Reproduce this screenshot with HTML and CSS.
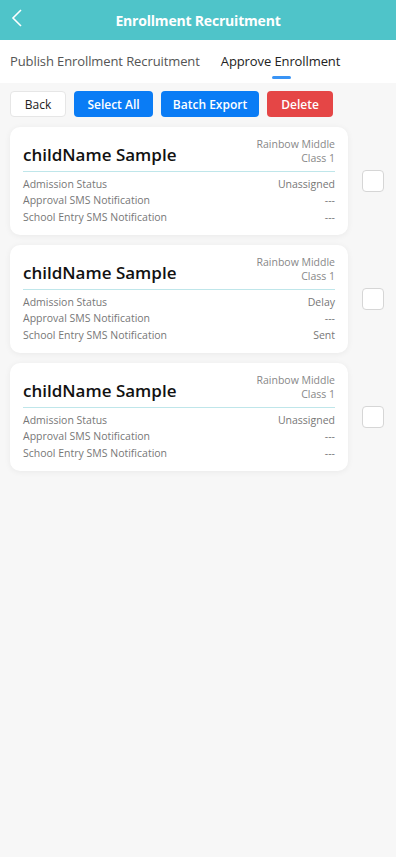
FILE: index.html
```html
<!DOCTYPE html>
<html lang="en">
<head>
    <meta charset="UTF-8">
    <meta name="viewport" content="width=device-width, initial-scale=1.0">
    <title>Enrollment Recruitment</title>
    <link rel="stylesheet" href="styles.css">
</head>
<body>
    <div class="header">
        <svg class="back-icon" width="12" height="18" viewBox="0 0 12 18">
            <polyline points="10,1 2,9 10,17" fill="none" stroke="#fff" stroke-width="1.6"/>
        </svg>
        <h1>Enrollment Recruitment</h1>
    </div>
    <div class="tabs">
        <div class="tab">Publish Enrollment Recruitment</div>
        <div class="tab active">Approve Enrollment</div>
    </div>
    <div class="toolbar">
        <button class="btn btn-plain">Back</button>
        <button class="btn btn-blue">Select All</button>
        <button class="btn btn-blue">Batch Export</button>
        <button class="btn btn-red">Delete</button>
    </div>
    <div class="list" id="list"></div>
    <script>
        const items = [
            { status: 'Unassigned', approval: '---', entry: '---' },
            { status: 'Delay', approval: '---', entry: 'Sent' },
            { status: 'Unassigned', approval: '---', entry: '---' }
        ];
        const list = document.getElementById('list');
        items.forEach(item => {
            const row = document.createElement('div');
            row.className = 'item';
            row.innerHTML = `
                <div class="card">
                    <div class="card-head">
                        <div class="name">childName Sample</div>
                        <div class="school">Rainbow Middle<br>Class 1</div>
                    </div>
                    <div class="card-body">
                        <div class="line"><span>Admission Status</span><span>${item.status}</span></div>
                        <div class="line"><span>Approval SMS Notification</span><span>${item.approval}</span></div>
                        <div class="line"><span>School Entry SMS Notification</span><span>${item.entry}</span></div>
                    </div>
                </div>
                <div class="check"></div>`;
            list.appendChild(row);
        });
    </script>
</body>
</html>
```

FILE: styles.css
```css
body {
    margin: 0;
    font-family: "Open Sans", "Noto Sans", sans-serif;
    background: #f7f7f7;
    min-height: 857px;
}
.header {
    height: 40px;
    background: #4fc4c9;
    display: flex;
    align-items: center;
    justify-content: center;
    position: relative;
}
.back-icon {
    position: absolute;
    left: 11px;
    top: 9px;
}
.header h1 {
    margin: 0;
    color: #fff;
    font-size: 14px;
    font-weight: bold;
    letter-spacing: -0.2px;
}
.tabs {
    background: #fff;
    height: 43px;
    display: flex;
    padding-left: 10px;
    gap: 21px;
}
.tab {
    font-size: 13px;
    color: #555;
    line-height: 43px;
    letter-spacing: -0.1px;
    position: relative;
}
.tab.active {
    color: #222;
}
.tab.active::after {
    content: "";
    position: absolute;
    left: 50%;
    margin-left: -9px;
    bottom: 4px;
    width: 19px;
    height: 3px;
    border-radius: 2px;
    background: #3a94f5;
}
.toolbar {
    display: flex;
    gap: 8px;
    padding: 8px 10px 0;
}
.btn {
    height: 26px;
    border: none;
    border-radius: 4px;
    font-family: inherit;
    font-size: 12px;
    font-weight: 600;
    color: #fff;
    padding: 0;
}
.btn-plain {
    width: 56px;
    background: #fff;
    border: 1px solid #e6e6e6;
    color: #222;
    font-weight: normal;
}
.btn-blue {
    background: #0a7cf5;
}
.btn-blue:nth-child(2) {
    width: 79px;
}
.btn-blue:nth-child(3) {
    width: 98px;
}
.btn-red {
    width: 66px;
    background: #e54646;
}
.list {
    display: flex;
    flex-direction: column;
    gap: 10px;
    padding: 10px 10px 0;
}
.item {
    display: flex;
    align-items: center;
    gap: 14px;
}
.card {
    width: 338px;
    box-sizing: border-box;
    background: #fff;
    border-radius: 10px;
    padding: 10px 13px 10px;
    box-shadow: 0 1px 6px rgba(0, 0, 0, 0.06);
}
.card-head {
    display: flex;
    justify-content: space-between;
    align-items: flex-end;
    padding-bottom: 6px;
    border-bottom: 1px solid #bfe6ea;
}
.name {
    font-size: 17px;
    font-weight: 600;
    color: #111;
    line-height: 24px;
    margin-bottom: -2px;
}
.school {
    font-size: 10.5px;
    color: #888;
    text-align: right;
    line-height: 14px;
}
.card-body {
    padding-top: 3.5px;
}
.line {
    display: flex;
    justify-content: space-between;
    font-size: 10.5px;
    color: #777;
    line-height: 16.5px;
}
.check {
    width: 20px;
    height: 20px;
    border: 1px solid #d6d6d6;
    border-radius: 4px;
    background: #fff;
}
```
